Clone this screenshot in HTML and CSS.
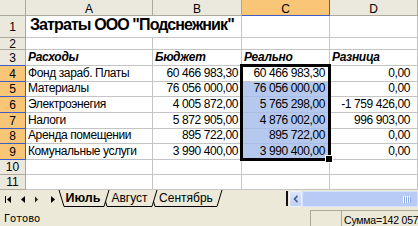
FILE: index.html
```html
<!DOCTYPE html>
<html lang="ru">
<head>
<meta charset="utf-8">
<title>Затраты</title>
<link rel="stylesheet" href="styles.css">
</head>
<body>
<div class="app">
  <div class="sheet-wrap">
  <div class="sheet">
    <div class="hd corner"></div>
    <div class="hd ch">A</div>
    <div class="hd ch">B</div>
    <div class="hd ch hl">C</div>
    <div class="hd ch">D</div>

    <div class="hd rh">1</div>
    <div class="c title">Затраты ООО "Подснежник"</div>
    <div class="c"></div>
    <div class="c"></div>

    <div class="hd rh">2</div>
    <div class="c"></div><div class="c"></div><div class="c"></div><div class="c"></div>

    <div class="hd rh above">3</div>
    <div class="c bi">Расходы</div>
    <div class="c bi">Бюджет</div>
    <div class="c bi">Реально</div>
    <div class="c bi">Разница</div>

    <div class="hd rh hl">4</div>
    <div class="c">Фонд зараб. Платы</div>
    <div class="c num nb">60 466 983,30</div>
    <div class="c num nc">60 466 983,30</div>
    <div class="c num nd">0,00</div>

    <div class="hd rh hl">5</div>
    <div class="c">Материалы</div>
    <div class="c num nb">76 056 000,00</div>
    <div class="c num nc sel">76 056 000,00</div>
    <div class="c num nd">0,00</div>

    <div class="hd rh hl">6</div>
    <div class="c">Электроэнегия</div>
    <div class="c num nb">4 005 872,00</div>
    <div class="c num nc sel">5 765 298,00</div>
    <div class="c num nd">-1 759 426,00</div>

    <div class="hd rh hl">7</div>
    <div class="c">Налоги</div>
    <div class="c num nb">5 872 905,00</div>
    <div class="c num nc sel">4 876 002,00</div>
    <div class="c num nd">996 903,00</div>

    <div class="hd rh hl">8</div>
    <div class="c">Аренда помещении</div>
    <div class="c num nb">895 722,00</div>
    <div class="c num nc sel">895 722,00</div>
    <div class="c num nd">0,00</div>

    <div class="hd rh hl">9</div>
    <div class="c">Комунальные услуги</div>
    <div class="c num nb">3 990 400,00</div>
    <div class="c num nc sel">3 990 400,00</div>
    <div class="c num nd">0,00</div>

    <div class="hd rh">10</div>
    <div class="c"></div><div class="c"></div><div class="c"></div><div class="c"></div>

    <div class="hd rh">11</div>
    <div class="c"></div><div class="c"></div><div class="c"></div><div class="c"></div>
  </div>
  <div class="sheet overlay">
    <div class="selbox"></div>
  </div>
  </div>

  <div class="tabbar">
    <div class="nav">
      <svg width="57" height="17" viewBox="0 0 57 17">
        <rect x="5" y="6" width="1" height="7" fill="#000"/>
        <polygon points="11,6 7,9.5 11,13" fill="#000"/>
        <polygon points="25,6 21,9.5 25,13" fill="#000"/>
        <polygon points="35,6.5 38,9.5 35,12.5" fill="#222"/>
        <polygon points="51,6 55,9.5 51,13" fill="#000"/>
      </svg>
    </div>
    <div class="tabs">
      <svg class="tab-lines" width="227" height="17" viewBox="0 0 227 17">
        <g fill="none" stroke="#000" stroke-width="1">
          <polyline points="2,0 7,16.5 47,16.5 52,0"/>
          <polyline points="48.5,11.2 50,16.5 95,16.5 100,0"/>
          <polyline points="96.5,11.2 98,16.5 160,16.5 165,0"/>
        </g>
      </svg>
      <div class="labels">
        <span class="tab t1 active">Июль</span>
        <span class="tab t2">Август</span>
        <span class="tab t3">Сентябрь</span>
      </div>
    </div>
    <div class="split"></div>
    <div class="hscroll">
      <div class="sbtn">
        <svg width="6" height="8" viewBox="0 0 6 8"><polyline points="4.5,0.8 1.5,4 4.5,7.2" fill="none" stroke="#4D6185" stroke-width="1.7"/></svg>
      </div>
      <div class="thumb">
        <svg width="8" height="7" viewBox="0 0 8 7">
          <g stroke="#fff" stroke-width="1"><line x1="0.5" y1="0" x2="0.5" y2="7"/><line x1="2.5" y1="0" x2="2.5" y2="7"/><line x1="4.5" y1="0" x2="4.5" y2="7"/><line x1="6.5" y1="0" x2="6.5" y2="7"/></g>
          <g stroke="#8CA6E0" stroke-width="1"><line x1="1.5" y1="1" x2="1.5" y2="7"/><line x1="3.5" y1="1" x2="3.5" y2="7"/><line x1="5.5" y1="1" x2="5.5" y2="7"/><line x1="7.5" y1="1" x2="7.5" y2="7"/></g>
        </svg>
      </div>
    </div>
  </div>

  <div class="status">
    <div class="ready">Готово</div>
    <div class="panel p1"></div>
    <div class="panel p2">Сумма=142 057</div>
  </div>
</div>
</body>
</html>
```
FILE: styles.css
```css
* { box-sizing: border-box; }
html, body { margin: 0; padding: 0; }
body {
  width: 418px;
  height: 226px;
  overflow: hidden;
  background: #ECE9D8;
  font-family: "Liberation Sans", Arial, sans-serif;
  color: #000;
}
.app {
  width: 418px;
  height: 226px;
  display: flex;
  flex-direction: column;
}

/* ---------- grid ---------- */
.sheet-wrap {
  display: grid;
  flex: none;
}
.sheet-wrap > .sheet { grid-area: 1 / 1; }
.sheet {
  display: grid;
  grid-template-columns: 26px 127px 89px 88px 88px;
  grid-template-rows: 16px 22px 12px 16px 16px 15px 16px 16px 15px 16px 15px 15px;
  background: #fff;
}
.sheet.overlay {
  background: transparent;
  pointer-events: none;
}
.hd {
  background: #EBE9DE;
  border-right: 1px solid #ABA99A;
  border-bottom: 1px solid #ABA99A;
  display: flex;
  align-items: center;
  justify-content: center;
  font-size: 12px;
  line-height: 12px;
}
.ch { align-items: flex-end; }
.hd.hl {
  background: #F9C677;
  border-right-color: #3F5DC4;
  border-bottom-color: #3F5DC4;
}
.hd.above { border-bottom-color: #3F5DC4; }

.c {
  border-right: 1px solid #C4C4C4;
  border-bottom: 1px solid #C4C4C4;
  display: flex;
  align-items: flex-end;
  padding: 0 2px 1px 2px;
  font-size: 12px;
  line-height: 14px;
  letter-spacing: -0.4px;
  white-space: nowrap;
  overflow: hidden;
}
.title {
  grid-column: span 2;
  font-size: 16px;
  line-height: 18px;
  font-weight: bold;
  letter-spacing: -0.9px;
  padding: 0 0 3px 4px;
}
.bi { font-weight: bold; font-style: italic; letter-spacing: -0.3px; }
.num { justify-content: flex-end; }
.nb { padding-right: 3px; }
.nc { padding-right: 4px; }
.nd { padding-right: 7px; }
.sel {
  background: #B5C8EE;
  border-bottom-color: #A9BDE6;
}
.selbox {
  grid-row: 5 / 11;
  grid-column: 4 / 5;
  margin: -2px -1px -1px -2px;
  border: 3px solid #000;
  position: relative;
}
.selbox::after {
  content: "";
  position: absolute;
  right: -5px;
  bottom: -5px;
  width: 6px;
  height: 6px;
  background: #000;
  border: 1px solid #fff;
}

/* ---------- sheet tabs ---------- */
.tabbar {
  height: 17px;
  display: flex;
  flex: none;
  background: #ECE9D8;
}
.nav { width: 57px; flex: none; }
.nav svg { display: block; }
.tabs {
  width: 227px;
  flex: none;
  display: grid;
}
.tabs > .tab-lines, .tabs > .labels { grid-area: 1 / 1; }
.tab-lines { display: block; }
.labels { display: flex; }
.tab {
  display: block;
  text-align: center;
  font-size: 12px;
  line-height: 15px;
  padding-top: 1px;
  white-space: nowrap;
}
.t1 { margin-left: 5px; width: 42px; font-weight: bold; font-size: 12.5px; }
.t2 { margin-left: 3px; width: 45px; }
.t3 { margin-left: 3px; width: 62px; }

.split {
  width: 2px;
  margin: 1px 1px 1px 2px;
  background: #111;
  flex: none;
}
.hscroll {
  flex: 1;
  display: flex;
  margin-top: 1px;
  height: 16px;
}
.sbtn {
  width: 13px;
  flex: none;
  background: linear-gradient(#DCE5FC, #C0D1F8);
  border: 1px solid #EEF2FD;
  border-radius: 2px;
  display: flex;
  align-items: center;
  justify-content: center;
}
.sbtn svg { display: block; }
.thumb {
  flex: 1;
  background: #B8CBF6;
  border: 1px solid #D6E1FB;
  border-radius: 2px;
  display: flex;
  align-items: center;
  justify-content: flex-end;
  padding-right: 6px;
}
.thumb svg { display: block; }

/* ---------- status bar ---------- */
.status {
  height: 19px;
  display: flex;
  flex: none;
  font-family: "DejaVu Sans", "Liberation Sans", sans-serif;
  font-size: 10px;
  line-height: 12px;
}
.ready {
  width: 310px;
  flex: none;
  padding: 6px 0 0 4px;
}
.panel {
  margin-top: 3px;
  border-top: 1px solid #ACA899;
  border-left: 1px solid #ACA899;
}
.p1 { width: 31px; flex: none; }
.p2 {
  flex: 1;
  padding: 3px 0 0 2px;
  white-space: nowrap;
  overflow: hidden;
  font-family: "Liberation Sans", Arial, sans-serif;
  font-size: 10.5px;
  letter-spacing: -0.2px;
}
```
